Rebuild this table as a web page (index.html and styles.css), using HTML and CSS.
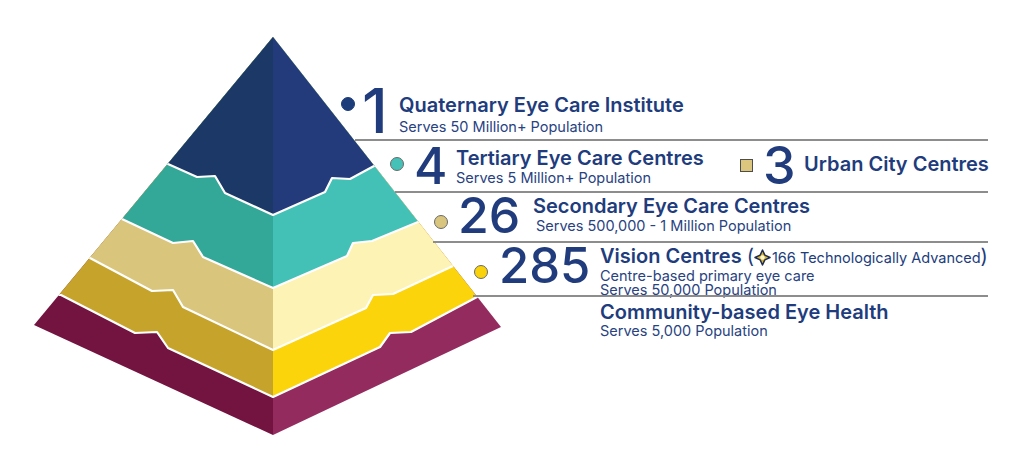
FILE: index.html
```html
<!DOCTYPE html>
<html lang="en">
<head>
<meta charset="utf-8">
<title>Eye Care Pyramid</title>
<link rel="stylesheet" href="styles.css">
</head>
<body>
<div class="stage">
  <svg class="pyramid" viewBox="0 0 520 458" xmlns="http://www.w3.org/2000/svg">
    <defs>
      <clipPath id="lf"><polygon points="273,37 34,325 273,435"/></clipPath>
      <clipPath id="rf"><polygon points="273,37 273,435 501,327"/></clipPath>
      <clipPath id="pyr"><polygon points="273,37 34,325 273,435 501,327"/></clipPath>
    </defs>
    <g clip-path="url(#lf)">
      <rect x="0" y="0" width="520" height="458" fill="#73133f"/>
      <polygon fill="#c6a42b" points="0,295 61,295 135,333 157,332 168,348 273,397 380,347 390,333 411,332 477,297 520,297 520,0 0,0"/>
      <polygon fill="#d9c57c" points="0,258 90,258 152,291 173,290 183,307 273,350 366,308 373,295 393,294 453,266 520,266 520,0 0,0"/>
      <polygon fill="#33a898" points="0,219 122,219 173,243 193,241 203,257 273,288 347,256 353,243 372,241 418,222 520,222 520,0 0,0"/>
      <polygon fill="#1b3866" points="0,164 168,164 197,177 215,176 225,193 273,215 325,192 332,178 350,179 374,166 520,166 520,0 0,0"/>
    </g>
    <g clip-path="url(#rf)">
      <rect x="0" y="0" width="520" height="458" fill="#942b5f"/>
      <polygon fill="#fbd40b" points="0,295 61,295 135,333 157,332 168,348 273,397 380,347 390,333 411,332 477,297 520,297 520,0 0,0"/>
      <polygon fill="#fcf3b4" points="0,258 90,258 152,291 173,290 183,307 273,350 366,308 373,295 393,294 453,266 520,266 520,0 0,0"/>
      <polygon fill="#44c1b6" points="0,219 122,219 173,243 193,241 203,257 273,288 347,256 353,243 372,241 418,222 520,222 520,0 0,0"/>
      <polygon fill="#233b7b" points="0,164 168,164 197,177 215,176 225,193 273,215 325,192 332,178 350,179 374,166 520,166 520,0 0,0"/>
    </g>
    <g clip-path="url(#pyr)" fill="none" stroke="#ffffff" stroke-width="2.2" stroke-linejoin="round">
      <polyline points="40,295 61,295 135,333 157,332 168,348 273,397 380,347 390,333 411,332 477,297 500,297"/>
      <polyline points="70,258 90,258 152,291 173,290 183,307 273,350 366,308 373,295 393,294 453,266 480,266"/>
      <polyline points="100,219 122,219 173,243 193,241 203,257 273,288 347,256 353,243 372,241 418,222 440,222"/>
      <polyline points="150,164 168,164 197,177 215,176 225,193 273,215 325,192 332,178 350,179 374,166 390,166"/>
    </g>
  </svg>

  <div class="tiers">
    <div class="row r1">
      <span class="dot dot-navy"></span>
      <span class="num n1">1</span>
      <div class="info i1">
        <div class="title">Quaternary Eye Care Institute</div>
        <div class="sub">Serves 50 Million+ Population</div>
      </div>
    </div>
    <div class="divider d1"></div>

    <div class="row r2">
      <span class="dot dot-teal"></span>
      <span class="num n4">4</span>
      <div class="info i2">
        <div class="title">Tertiary Eye Care Centres</div>
        <div class="sub">Serves 5 Million+ Population</div>
      </div>
      <span class="square"></span>
      <span class="num n3">3</span>
      <div class="info urban">
        <div class="title">Urban City Centres</div>
      </div>
    </div>
    <div class="divider d2"></div>

    <div class="row r3">
      <span class="dot dot-tan"></span>
      <span class="num n26">26</span>
      <div class="info i3">
        <div class="title">Secondary Eye Care Centres</div>
        <div class="sub">Serves 500,000 - 1 Million Population</div>
      </div>
    </div>
    <div class="divider d3"></div>

    <div class="row r4">
      <span class="dot dot-yellow"></span>
      <span class="num n285">285</span>
      <div class="info i4">
        <div class="title">Vision Centres <span class="paren">(</span><svg class="star" viewBox="0 0 16 16" xmlns="http://www.w3.org/2000/svg"><path d="M8 0.9 L10.2 5.8 L15.1 8 L10.2 10.2 L8 15.1 L5.8 10.2 L0.9 8 L5.8 5.8 Z" fill="#d9b52c" stroke="#1f2d55" stroke-width="1.4" stroke-linejoin="round"/><circle cx="8" cy="8" r="2.1" fill="#fff6cf"/></svg><span class="adv">166 Technologically Advanced</span><span class="paren">)</span></div>
        <div class="sub first">Centre-based primary eye care</div>
        <div class="sub">Serves 50,000 Population</div>
      </div>
    </div>
    <div class="divider d4"></div>

    <div class="row r5">
      <div class="info i5">
        <div class="title">Community-based Eye Health</div>
        <div class="sub">Serves 5,000 Population</div>
      </div>
    </div>
  </div>
</div>
</body>
</html>
```

FILE: styles.css
```css
html, body {
  margin: 0;
  padding: 0;
  background: #ffffff;
}

body {
  font-family: Inter, "Noto Sans", "Liberation Sans", sans-serif;
  color: #213c7c;
}

.stage {
  display: grid;
  width: 1024px;
  height: 458px;
  overflow: hidden;
}

.stage > * {
  grid-area: 1 / 1;
}

.pyramid {
  display: block;
  width: 520px;
  height: 458px;
}

.tiers {
  width: 988px;
  padding-top: 80px;
  display: flex;
  flex-direction: column;
}

.row {
  display: flex;
  align-items: flex-start;
}

.divider {
  height: 2px;
  background: #8d8d8d;
}

.d1 { margin-left: 355px; }
.d2 { margin-left: 395px; }
.d3 { margin-left: 433px; }
.d4 { margin-left: 473px; }

.dot {
  flex: none;
  width: 14px;
  height: 14px;
  box-sizing: border-box;
  border-radius: 50%;
  border: 1px solid #6a6a6a;
}

.dot-navy { background: #1d3c7a; border-color: #1d3c7a; }
.dot-teal { background: #45c1b7; }
.dot-tan { background: #d9c57e; }
.dot-yellow { background: #f9d20b; }

.square {
  flex: none;
  width: 13px;
  height: 13px;
  box-sizing: border-box;
  background: #dcc67d;
  border: 1px solid #4d4d4d;
  margin-top: 17.5px;
}

.num {
  flex: none;
  font-weight: 500;
  color: #213c7c;
}

.info {
  flex: none;
}

.title {
  font-size: 20px;
  line-height: 20px;
  font-weight: 600;
  white-space: nowrap;
}

.sub {
  font-size: 14.5px;
  line-height: 16px;
  font-weight: 400;
  white-space: nowrap;
  color: #28437f;
}

/* Row 1 */
.r1 { height: 59px; margin-left: 341px; }
.r1 .dot { margin-top: 17px; }
.n1 { font-size: 62px; line-height: 46px; margin: 7.5px 0 0 7px; width: 37px; }
.i1 { margin-top: 15px; }
.i1 .sub { margin-top: 4px; }

/* Row 2 */
.r2 { height: 50px; margin-left: 390px; }
.r2 .dot { margin-top: 16px; }
.n4 { font-size: 51px; line-height: 38px; margin: 6px 0 0 10px; width: 42px; }
.i2 { margin-top: 7px; width: 284px; }
.i2 .sub { margin-top: 2px; }
.n3 { font-size: 52px; line-height: 38px; margin: 6px 0 0 10px; width: 41px; }
.urban { margin-top: 13px; }

/* Row 3 */
.r3 { height: 48px; margin-left: 434px; }
.r3 .dot { margin-top: 22px; }
.n26 { font-size: 50px; line-height: 36px; margin: 4px 0 0 10px; width: 75px; }
.i3 { margin-top: 3px; }
.i3 .sub { margin: 2px 0 0 3px; }

/* Row 4 */
.r4 { height: 52px; margin-left: 474px; }
.r4 .dot { margin-top: 22px; }
.n285 { font-size: 49px; line-height: 36px; margin: 4.5px 0 0 11px; width: 101px; }
.i4 { margin-top: 4px; }
.i4 .title { line-height: 18px; }
.i4 .sub { line-height: 14px; }
.i4 .sub.first { margin-top: 2px; }
.paren { font-weight: 400; }
.adv { font-weight: 400; font-size: 14.5px; }
.star {
  width: 17px;
  height: 17px;
  vertical-align: -3px;
  margin: 0 1px 0 0;
}

/* Row 5 */
.r5 { margin-left: 600px; padding-top: 5px; }
.i5 .sub { margin-top: 1px; }
```
